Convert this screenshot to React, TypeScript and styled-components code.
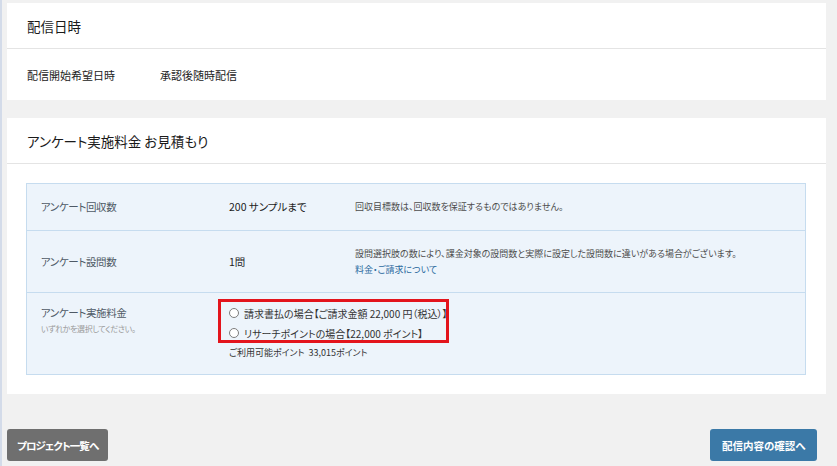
import * as React from "react";
import styled, { createGlobalStyle } from "styled-components";

const GlobalStyle = createGlobalStyle`
  html, body {
    margin: 0;
    padding: 0;
    background-color: #f1f1f1;
  }
  body {
    font-family: "Noto Sans CJK JP", "Noto Sans", sans-serif;
    font-feature-settings: "palt";
    color: #222;
  }
`;

const Page = styled.div`
  min-height: 466px;
  box-sizing: border-box;
  border-left: 2px solid #d3dbe9;
  padding: 3px 11px 0 5px;
`;

const Panel = styled.section`
  background-color: #fff;
  margin-bottom: 18px;
`;

const PanelHeader = styled.h2`
  margin: 0;
  height: 45px;
  display: flex;
  align-items: center;
  padding-left: 20px;
  font-size: 13.5px;
  font-weight: 400;
  color: #1a1a1a;
  border-bottom: 1px solid #e4e4e4;
`;

const InfoRow = styled.div`
  display: grid;
  grid-template-columns: 133px 1fr;
  align-items: center;
  height: 51px;
  padding-left: 20px;
  font-size: 11px;
  color: #222;
`;

const PanelBody = styled.div`
  padding: 19px 20px 19px 19px;
`;

const Table = styled.div`
  background-color: #edf4fb;
  border: 1px solid #c6dcef;
`;

const TableRow = styled.div<{ $height: number; $align?: string }>`
  display: grid;
  grid-template-columns: 188px 126px 1fr;
  align-items: ${(p) => p.$align || "center"};
  height: ${(p) => p.$height}px;
  box-sizing: border-box;
  padding-left: 14px;
  padding-top: ${(p) => (p.$align === "start" ? 10 : 0)}px;
  & + & {
    border-top: 1px solid #c6dcef;
  }
`;

const Label = styled.div`
  font-size: 10.5px;
  letter-spacing: -0.4px;
  line-height: 20px;
  color: #4f5a66;
`;

const SubLabel = styled.div`
  font-size: 8px;
  letter-spacing: -0.4px;
  line-height: 12px;
  color: #9a9a9a;
`;

const Value = styled.div`
  font-size: 10.5px;
  line-height: 20px;
  color: #1c1c1c;
`;

const Note = styled.div`
  font-size: 9px;
  line-height: 16px;
  color: #4c4c4c;
`;

const NoteLink = styled.a`
  display: block;
  color: #2b6a9e;
  text-decoration: none;
`;

const Choices = styled.div`
  grid-column: 2 / span 2;
`;

const RadioGroup = styled.div`
  position: relative;
  &::after {
    content: "";
    position: absolute;
    left: -11px;
    top: -4px;
    width: 231px;
    height: 44px;
    box-sizing: border-box;
    border: 3px solid #e3141c;
    pointer-events: none;
  }
`;

const RadioLine = styled.label`
  display: flex;
  align-items: center;
  gap: 5px;
  height: 20px;
  font-size: 10px;
  color: #333;
`;

const Radio = styled.input`
  appearance: none;
  margin: 0;
  width: 10px;
  height: 10px;
  border: 1px solid #7d7d7d;
  border-radius: 50%;
  background: #fff;
  box-sizing: border-box;
`;

const Points = styled.div`
  font-size: 9px;
  line-height: 20px;
  color: #333;
`;

const Footer = styled.div`
  display: flex;
  justify-content: space-between;
  padding: 17px 9px 0 0;
`;

const Button = styled.button<{ $primary?: boolean }>`
  height: 32px;
  padding: 0 ${(p) => (p.$primary ? "11.5px" : "10px")};
  border: none;
  border-radius: 3px;
  background-color: ${(p) => (p.$primary ? "#3b79a7" : "#6f6f6f")};
  color: #fff;
  font-family: inherit;
  font-feature-settings: "palt";
  font-size: 10.5px;
  letter-spacing: ${(p) => (p.$primary ? "0" : "-0.9px")};
  font-weight: 700;
  cursor: pointer;
`;

export default function App() {
  return (
    <>
      <GlobalStyle />
      <Page>
        <Panel>
          <PanelHeader>配信日時</PanelHeader>
          <InfoRow>
            <div>配信開始希望日時</div>
            <div>承認後随時配信</div>
          </InfoRow>
        </Panel>

        <Panel>
          <PanelHeader>アンケート実施料金 お見積もり</PanelHeader>
          <PanelBody>
            <Table>
              <TableRow $height={46}>
                <Label>アンケート回収数</Label>
                <Value>200 サンプルまで</Value>
                <Note>回収目標数は、回収数を保証するものではありません。</Note>
              </TableRow>
              <TableRow $height={62}>
                <Label>アンケート設問数</Label>
                <Value>1問</Value>
                <Note>
                  設問選択肢の数により、課金対象の設問数と実際に設定した設問数に違いがある場合がございます。
                  <NoteLink href="#">料金・ご請求について</NoteLink>
                </Note>
              </TableRow>
              <TableRow $height={82} $align="start">
                <div>
                  <Label>アンケート実施料金</Label>
                  <SubLabel>いずれかを選択してください。</SubLabel>
                </div>
                <Choices>
                  <RadioGroup>
                    <RadioLine>
                      <Radio type="radio" name="pay" />
                      請求書払の場合【ご請求金額 22,000 円（税込）】
                    </RadioLine>
                    <RadioLine>
                      <Radio type="radio" name="pay" />
                      リサーチポイントの場合【22,000 ポイント】
                    </RadioLine>
                  </RadioGroup>
                  <Points>ご利用可能ポイント&nbsp;&nbsp;33,015ポイント</Points>
                </Choices>
              </TableRow>
            </Table>
          </PanelBody>
        </Panel>

        <Footer>
          <Button>プロジェクト一覧へ</Button>
          <Button $primary>配信内容の確認へ</Button>
        </Footer>
      </Page>
    </>
  );
}
